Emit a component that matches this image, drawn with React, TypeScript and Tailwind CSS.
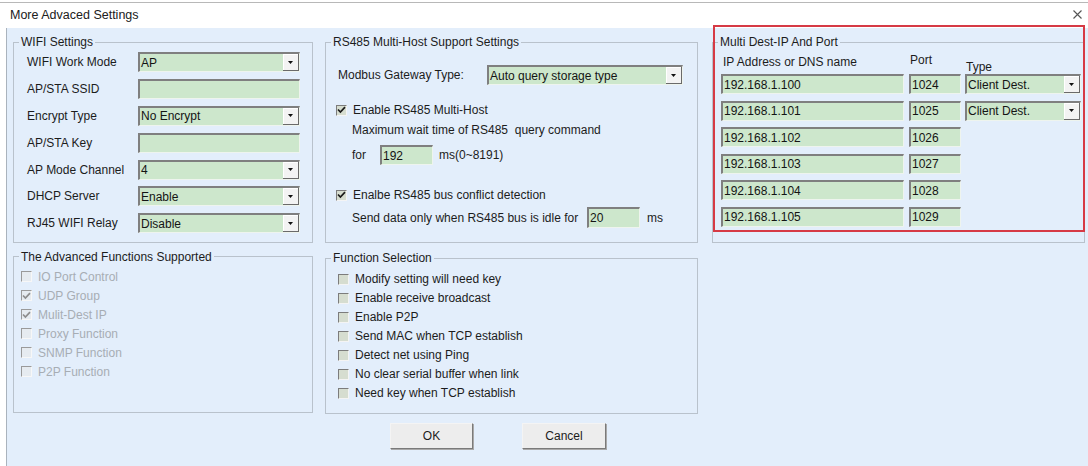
import React from "react";

type FieldProps = {
  value?: string;
  select?: boolean;
  className?: string;
};

// Sunken green edit / combo box in the classic Windows style
function Field({ value = "", select = false, className = "" }: FieldProps) {
  return (
    <div
      className={`flex h-[20px] items-stretch bg-[#cde7cc] border-t-2 border-l-2 border-t-[#7f7f7f] border-l-[#7f7f7f] border-r border-b border-r-[#eef4ee] border-b-[#eef4ee] ${className}`}
    >
      <span className="flex flex-1 items-center overflow-hidden whitespace-nowrap pl-[1px] leading-none text-[#141414]">
        {value}
      </span>
      {select && (
        <span className="flex w-[16px] items-center justify-center border-r border-b border-r-[#6a6a6a] border-b-[#6a6a6a] bg-[#f3f3f3] shadow-[inset_1px_1px_0_#ffffff]">
          <svg width="5" height="3" viewBox="0 0 5 3">
            <path d="M0 0h5L2.5 3z" fill="#111" />
          </svg>
        </span>
      )}
    </div>
  );
}

type CheckProps = {
  checked?: boolean;
  disabled?: boolean;
  label: string;
};

function Check({ checked = false, disabled = false, label }: CheckProps) {
  return (
    <div className="flex items-center gap-[6px]">
      <span
        className={`flex h-[11px] w-[11px] shrink-0 items-center justify-center border-t border-l border-b border-r ${
          disabled
            ? "border-t-[#9a9a9a] border-l-[#9a9a9a] border-b-[#f7f7f7] border-r-[#f7f7f7] bg-[#e6ebf0]"
            : "border-t-[#7c7c7c] border-l-[#7c7c7c] border-b-[#f4f4f4] border-r-[#f4f4f4] bg-[#d6ddd0]"
        }`}
      >
        {checked && (
          <svg width="9" height="8" viewBox="0 0 9 8">
            <path
              d="M1 3.5L3.4 6 8 1.2"
              fill="none"
              stroke={disabled ? "#8d8d8d" : "#1a1a1a"}
              strokeWidth="1.7"
            />
          </svg>
        )}
      </span>
      <span className={disabled ? "text-[#a7adb4]" : "text-[#1c1c1c]"}>{label}</span>
    </div>
  );
}

function GroupBox({
  title,
  className = "",
  children,
}: {
  title: string;
  className?: string;
  children: React.ReactNode;
}) {
  return (
    <fieldset className={`border border-[#b9c2cc] ${className}`}>
      <legend className="ml-[5px] px-[2px] leading-[14px] text-[#1c1c1c]">{title}</legend>
      {children}
    </fieldset>
  );
}

const wifiRows: { label: string; value: string; select: boolean }[] = [
  { label: "WIFI Work Mode", value: "AP", select: true },
  { label: "AP/STA SSID", value: "", select: false },
  { label: "Encrypt Type", value: "No Encrypt", select: true },
  { label: "AP/STA Key", value: "", select: false },
  { label: "AP Mode Channel", value: "4", select: true },
  { label: "DHCP Server", value: "Enable", select: true },
  { label: "RJ45 WIFI Relay", value: "Disable", select: true },
];

const advanced: { label: string; checked: boolean }[] = [
  { label: "IO Port Control", checked: false },
  { label: "UDP Group", checked: true },
  { label: "Mulit-Dest IP", checked: true },
  { label: "Proxy Function", checked: false },
  { label: "SNMP Function", checked: false },
  { label: "P2P Function", checked: false },
];

const functions = [
  "Modify setting will need key",
  "Enable receive broadcast",
  "Enable P2P",
  "Send MAC when TCP establish",
  "Detect net using Ping",
  "No clear serial buffer when link",
  "Need key when TCP establish",
];

const dests: { ip: string; port: string; type?: string }[] = [
  { ip: "192.168.1.100", port: "1024", type: "Client Dest." },
  { ip: "192.168.1.101", port: "1025", type: "Client Dest." },
  { ip: "192.168.1.102", port: "1026" },
  { ip: "192.168.1.103", port: "1027" },
  { ip: "192.168.1.104", port: "1028" },
  { ip: "192.168.1.105", port: "1029" },
];

function Button({ label, className = "" }: { label: string; className?: string }) {
  return (
    <button
      className={`flex h-[26px] items-center justify-center border border-t-[#f4f4f4] border-l-[#f4f4f4] border-r-[#7a7a7a] border-b-[#7a7a7a] bg-[#ededed] text-[#1c1c1c] shadow-[1px_1px_0_#a9a9a9] ${className}`}
    >
      {label}
    </button>
  );
}

export default function App() {
  return (
    <div className="relative flex h-[466px] w-[1088px] flex-col overflow-hidden bg-white font-['Liberation_Sans',Arial,sans-serif] text-[12px] text-[#1c1c1c]">
      {/* title bar */}
      <div className="mt-[2px] flex h-[26px] items-center justify-between border-t border-[#b8b8b8] pl-[10px] pr-[4px]">
        <span className="text-[12.5px] text-[#202020]">More Advaced Settings</span>
        <svg width="9" height="9" viewBox="0 0 9 9" className="mr-[2px] -mt-[2px]">
          <path d="M0.5 0.5L8.5 8.5M8.5 0.5L0.5 8.5" stroke="#555" strokeWidth="1.1" />
        </svg>
      </div>

      {/* dialog body */}
      <div className="ml-[6px] flex flex-1 gap-[12px] border-l border-[#aab3bd] bg-[#e3eefb] pl-[6px] pt-[7px]">
        {/* left column */}
        <div className="flex w-[300px] flex-col">
          <GroupBox title="WIFI Settings" className="pb-[5px]">
            {wifiRows.map((r) => (
              <div key={r.label} className="flex h-[26.8px] items-center pl-[13px]">
                <span className="w-[111px] shrink-0">{r.label}</span>
                <Field value={r.value} select={r.select} className="w-[162px]" />
              </div>
            ))}
          </GroupBox>
          <GroupBox title="The Advanced Functions Supported" className="mt-[7px] h-[163px]">
            <div className="flex flex-col pl-[7px] pt-[3.5px]">
              {advanced.map((a) => (
                <div key={a.label} className="flex h-[19px] items-center">
                  <Check label={a.label} checked={a.checked} disabled />
                </div>
              ))}
            </div>
          </GroupBox>
        </div>

        {/* middle column */}
        <div className="flex w-[373px] flex-col">
          <GroupBox title="RS485 Multi-Host Support Settings" className="h-[208px]">
            <div className="flex flex-col">
              <div className="mt-[16px] flex h-[20px] items-center pl-[12px]">
                <span className="w-[149px] shrink-0">Modbus Gateway Type:</span>
                <Field value="Auto query storage type" select className="w-[196px]" />
              </div>
              <div className="mt-[17px] flex h-[16px] items-center pl-[10px]">
                <Check label="Enable RS485 Multi-Host" checked />
              </div>
              <div className="mt-[4px] flex h-[16px] items-center pl-[26px]">
                Maximum wait time of RS485&nbsp; query command
              </div>
              <div className="mt-[8px] flex h-[18px] items-center pl-[26px]">
                <span className="w-[28px] shrink-0">for</span>
                <Field value="192" className="h-[17px] w-[53px]" />
                <span className="ml-[6px]">ms(0~8191)</span>
              </div>
              <div className="mt-[23px] flex h-[16px] items-center pl-[10px]">
                <Check label="Enalbe RS485 bus conflict detection" checked />
              </div>
              <div className="mt-[4px] flex h-[21px] items-center pl-[26px]">
                <span className="w-[235px] shrink-0">Send data only when RS485 bus is idle for</span>
                <Field value="20" className="h-[21px] w-[53px]" />
                <span className="ml-[7px]">ms</span>
              </div>
            </div>
          </GroupBox>
          <GroupBox title="Function Selection" className="mt-[8px] h-[163px]">
            <div className="flex flex-col pl-[12px] pt-[4.5px]">
              {functions.map((f) => (
                <div key={f} className="flex h-[19px] items-center">
                  <Check label={f} />
                </div>
              ))}
            </div>
          </GroupBox>
          <div className="mt-[9px] flex gap-[49px] pl-[65px]">
            <Button label="OK" className="w-[83px]" />
            <Button label="Cancel" className="w-[84px]" />
          </div>
        </div>

        {/* right column */}
        <div className="ml-[2px] flex w-[373px] flex-col">
          <GroupBox title="Multi Dest-IP And Port" className="h-[208px]">
            <div className="flex flex-col pl-[8px]">
              <div className="flex h-[25px] items-start">
                <span className="w-[188px] shrink-0 pl-[2px] pt-[4px]">IP Address or DNS name</span>
                <span className="w-[56px] shrink-0 pl-[1px] pt-[2px]">Port</span>
                <span className="pl-[1px] pt-[9px]">Type</span>
              </div>
              <div className="flex flex-col gap-[6.6px]">
                {dests.map((d) => (
                  <div key={d.ip} className="flex h-[20px] items-center gap-[4px]">
                    <Field value={d.ip} className="mr-[1px] w-[183px]" />
                    <Field value={d.port} className="w-[52px]" />
                    {d.type && <Field value={d.type} select className="w-[116px]" />}
                  </div>
                ))}
              </div>
            </div>
          </GroupBox>
        </div>
      </div>

      {/* highlight frame around the destination list */}
      <div className="pointer-events-none absolute left-[713px] top-[25px] h-[207px] w-[372px] border-2 border-[#d63a45]" />
    </div>
  );
}
